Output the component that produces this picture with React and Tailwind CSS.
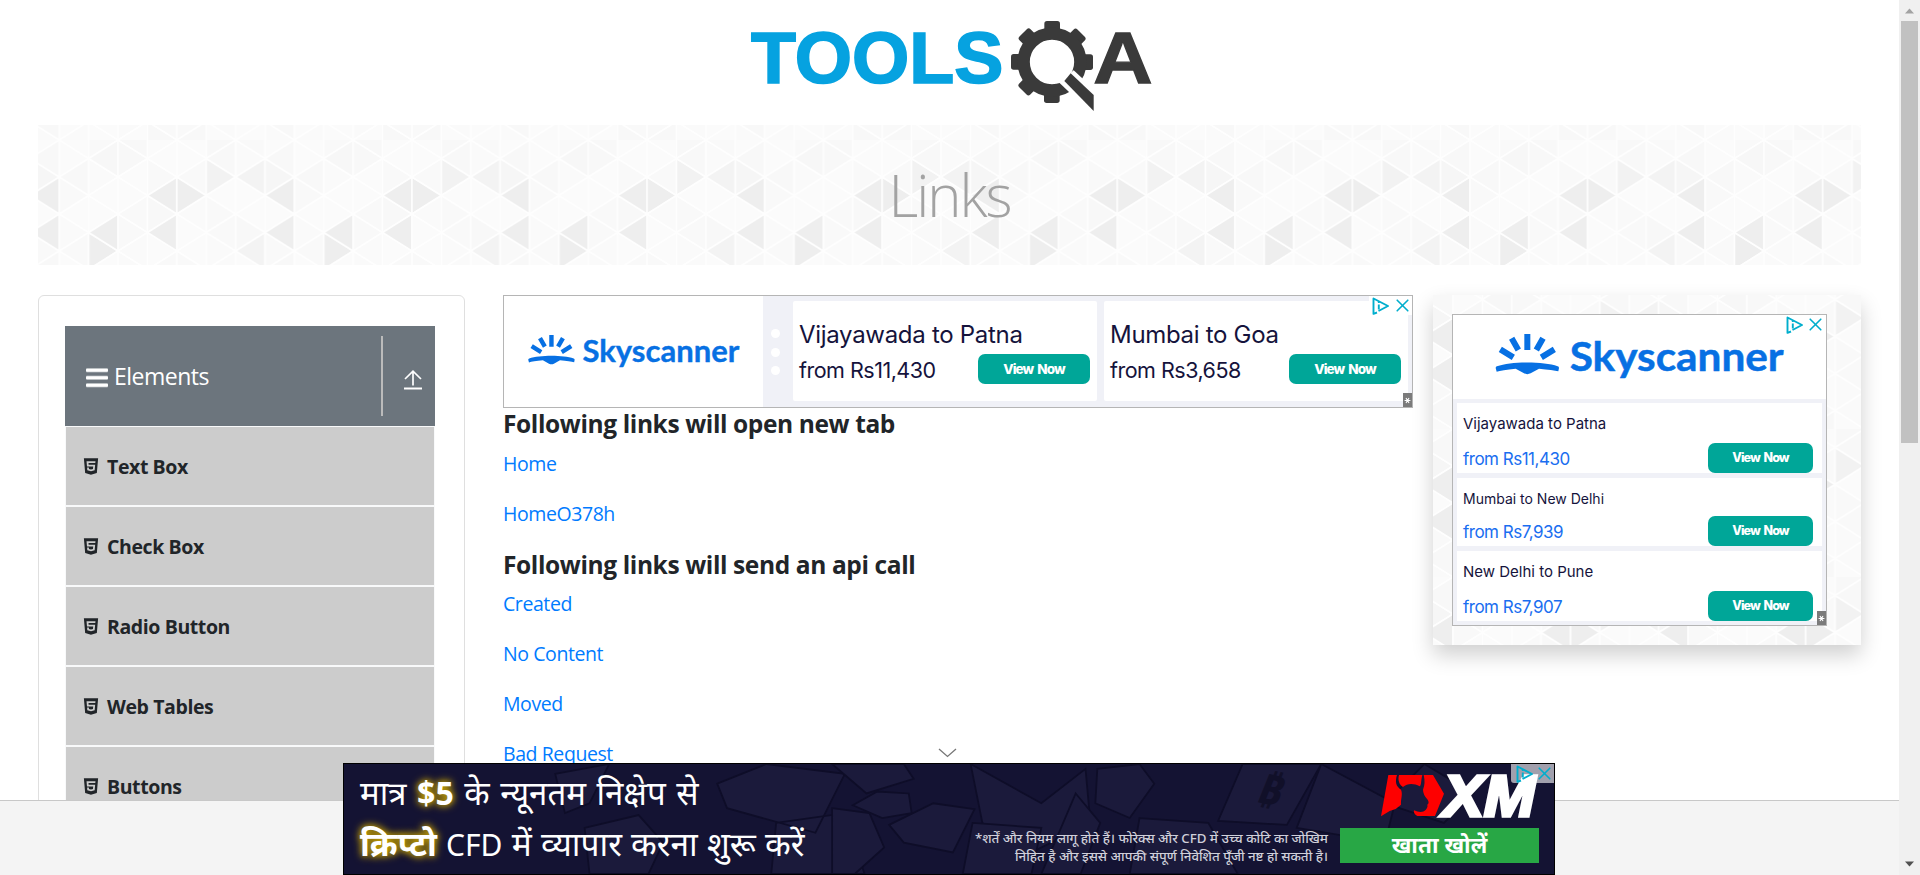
import React from "react";
import { FaHtml5 } from "react-icons/fa";

const COL = 29.39;
const ROW = 37;
const DARK = {
  "0L1": "#eeeeee", "0L2": "#eeeeee", "4L1": "#eeeeee", "4R1": "#eeeeee", "4L2": "#eeeeee",
  "2L2": "#eeeeee", "1R2": "#eeeeee", "2L-1": "#eeeeee", "5R0": "#f2f2f2", "7L0": "#f3f3f3",
  "7L2": "#f3f3f3", "7R0": "#f6f6f6", "6L-1": "#f4f4f4", "0L0": "#f8f8f8", "2L0": "#f7f7f7", "3R1": "#f8f8f8",
};
const SHADES = ["#fbfbfb", "#f9f9f9", "#fafafa", "#fbfbfb", "#f8f8f8"];

function Triangles({ id, dx, dy }) {
  const tris = [];
  for (let c = 0; c < 9; c++) {
    const odd = c % 2;
    for (let r = -1; r < 5; r++) {
      const x = c * COL;
      const y = r * ROW + (odd ? ROW / 2 : 0);
      const k = c % 8;
      tris.push({ key: `${c}L${r}`, pts: `${x},${y} ${x},${y + ROW} ${x - COL},${y + ROW / 2}`, fill: DARK[`${k}L${r}`] || SHADES[(k * 3 + r + 6) % 5] });
      tris.push({ key: `${c}R${r}`, pts: `${x},${y} ${x},${y + ROW} ${x + COL},${y + ROW / 2}`, fill: DARK[`${k}R${r}`] || SHADES[(k * 2 + r + 5) % 5] });
    }
  }
  return (
    <svg className="absolute inset-0 h-full w-full" aria-hidden="true">
      <defs>
        <pattern id={id} width={COL * 8} height={ROW * 4} patternUnits="userSpaceOnUse" patternTransform={`translate(${dx} ${dy})`}>
          {tris.map((t) => (
            <polygon key={t.key} points={t.pts} fill={t.fill} stroke="#fefefe" strokeWidth="1.6" strokeLinejoin="round" />
          ))}
        </pattern>
      </defs>
      <rect width="100%" height="100%" fill={`url(#${id})`} />
    </svg>
  );
}

function ToolsLogo() {
  return (
    <svg className="h-[125px] w-[440px]" viewBox="0 0 1320 375" role="img" aria-label="TOOLSQA">
      <text x="63" y="250" fontFamily="Liberation Sans, sans-serif" fontWeight="700" fontSize="216" fill="#06a2e0" stroke="#06a2e0" strokeWidth="5" textLength="757" lengthAdjust="spacingAndGlyphs">TOOLS</text>
      <g fill="#3a3a3a">
        {[0, 45, 90, 180, 225, 270, 315].map((a) => (
          <rect key={a} x="943" y="63" width="47" height="50" rx="8" transform={`rotate(${a} 966 186)`} />
        ))}
        <circle cx="966" cy="186" r="85" fill="none" stroke="#3a3a3a" strokeWidth="37" />
      </g>
      <polygon points="1031,211 1105,280 1105,360 988,248" fill="#fff" />
      <polygon points="1022,220 1091,285 1091,333 1003,243" fill="#3a3a3a" />
      <text x="1090" y="250" fontFamily="Liberation Sans, sans-serif" fontWeight="700" fontSize="216" fill="#3a3a3a" stroke="#3a3a3a" strokeWidth="4" textLength="178" lengthAdjust="spacingAndGlyphs">A</text>
    </svg>
  );
}

function SkyLogo({ className }) {
  return (
    <svg className={className} viewBox="0 0 868 150" role="img" aria-label="Skyscanner">
      <g transform="translate(-212 -141)" fill="#0770e3" stroke="none">
        <path stroke="#0770e3" strokeWidth="18" d="M308 144V192M261 157L281 192M355 157L335 192M227 190L266 214M389 190L350 214" />
        <path d="M213 246Q213 242 217 241C260 226 356 226 399 241Q403 242 403 246L401 256Q385 252 343 248L318 262Q308 267 298 262L273 248Q231 252 216 257Z" />
      </g>
      <text x="223" y="114" fontFamily="Lato, sans-serif" fontWeight="700" fontSize="122" fill="#0770e3" stroke="#0770e3" strokeWidth="1.5" textLength="642" lengthAdjust="spacingAndGlyphs">Skyscanner</text>
    </svg>
  );
}

function AdChoices({ className }) {
  return (
    <div className={className}>
      <svg width="18" height="18" viewBox="0 0 18 18" fill="none" stroke="#00aecd" strokeWidth="1.9" strokeLinejoin="round">
        <path d="M5 15.500L1.500 16.800V1.500L16 9L6.500 14" />
        <path d="M6.800 7.500V12.500M6.800 4.500V6" />
      </svg>
      <svg width="13" height="13" viewBox="0 0 13 13" stroke="#00aecd" strokeWidth="1.6" strokeLinecap="round">
        <path d="M1.200 1.200L11.800 11.800M11.800 1.200L1.200 11.800" />
      </svg>
    </div>
  );
}

function ViewNow({ className }) {
  return (
    <div className={`flex h-[30px] items-center justify-center rounded-[7px] bg-[#00a698] font-[Inter,sans-serif] font-extrabold text-white [word-spacing:2px] ${className}`}>
      View Now
    </div>
  );
}

function Badge({ className }) {
  return (
    <div className={`absolute flex h-[14px] w-[9px] items-center justify-center bg-[#7b7b7b] text-white ${className}`}>
      <svg width="7" height="7" viewBox="0 0 7 7" stroke="#fff" strokeWidth="1.1"><path d="M.6 3.500H6.400M2 1L5 6M5 1L2 6" /></svg>
    </div>
  );
}

function FlightWide({ route, price }) {
  return (
    <div className="flex h-[100px] w-[304px] flex-col rounded-[2px] bg-white pl-[6px] font-[Inter,sans-serif] text-[#15133c]">
      <div className="mt-[16px] h-[30px] text-[24px] leading-[35px] tracking-[-0.3px]">{route}</div>
      <div className="mt-[7px] flex h-[30px] justify-between pr-[7px]">
        <span className="text-[21.5px] leading-[33px] tracking-[-0.5px]">{price}</span>
        <ViewNow className="w-[112px] text-[13.500px] tracking-[-0.95px]" />
      </div>
    </div>
  );
}

function FlightRow({ route, price, className, title }) {
  return (
    <div className={`w-[365px] bg-white pr-[9px] pl-[6px] font-[Inter,sans-serif] ${className}`}>
      <div className={`leading-[41px] text-[#15133c] ${title}`}>{route}</div>
      <div className="flex h-[30px] justify-between">
        <span className="text-[17px] leading-[33px] tracking-[-0.5px] text-[#1a6ef0]">{price}</span>
        <ViewNow className="w-[105px] text-[12.500px] tracking-[-0.95px]" />
      </div>
    </div>
  );
}

const ITEMS = ["Text Box", "Check Box", "Radio Button", "Web Tables", "Buttons"];

function Sidebar() {
  return (
    <aside className="h-[600px] w-[427px] rounded-[6px] border border-[#dfdfdf] px-[26px] pt-[30px]">
      <div className="flex h-[100px] w-[370px] items-center bg-[#6c757d] pl-[21px] text-white">
        <svg width="22" height="20" viewBox="0 0 22 20" className="mt-[4px]">
          {[0, 7.5, 15].map((y) => (
            <g key={y} fill="#fff"><rect y={y} width="22" height="4.6" rx="1" opacity=".4" /><rect y={y + 0.8} width="22" height="3" rx="1" /></g>
          ))}
        </svg>
        <span className="ml-[6px] text-[23px] leading-[36px] tracking-[-0.5px]">Elements</span>
        <div className="ml-auto h-[80px] w-[2px] bg-[#bbbbbb]" />
        <svg width="18" height="20" viewBox="0 0 18 20" fill="none" stroke="#fff" className="mt-[7px] mr-[13px] ml-[21px]">
          <path d="M9 15.500V1.500M1 9L9 1.200L17 9" strokeWidth="1.700" />
          <path d="M0 18.500H18" strokeWidth="2" />
        </svg>
      </div>
      <ul className="w-[370px]">
        {ITEMS.map((t) => (
          <li key={t} className="flex h-[80px] items-center border border-[#f8f9fa] bg-[#cccccc] pl-[16px] text-[19.500px] font-bold tracking-[-0.4px] text-[#212529]">
            <FaHtml5 className="h-[19px] w-[18px]" />
            <span className="ml-[7px] pt-[2px]">{t}</span>
          </li>
        ))}
      </ul>
    </aside>
  );
}

function Heading({ children }) {
  return <h5 className="mb-[10px] pt-[1px] text-[24.500px] leading-[29px] font-bold tracking-[-0.38px]">{children}</h5>;
}

function Links({ items }) {
  return items.map((t) => (
    <p key={t} className="mb-[20px] text-[19.500px] leading-[30px] tracking-[-0.42px]"><a className="text-[#007bff]">{t}</a></p>
  ));
}

function XmBanner() {
  return (
    <div className="absolute top-[763px] left-[343px] flex h-[112px] w-[1212px] overflow-hidden border border-black bg-[#141333] font-['Noto_Sans','Noto_Sans_Devanagari',sans-serif] text-white">
      <svg className="absolute inset-0 h-full w-full" viewBox="0 0 1212 112" stroke="#0e0d28" strokeWidth="1.800" fill="#1b1a3b">
        <path d="M205 10L260 0L240 40L215 50ZM370 20L420 0L500 10L470 70L380 45ZM235 65L290 52L315 80L300 112H240ZM430 60L500 50L520 112H425Z" />
        <path d="M487 0L522 30L570 15L560 0ZM508 42L533 28L565 30L568 50L538 55ZM545 62L590 40L632 46L610 90L560 80ZM487 45L525 50L540 85L510 112H487ZM628 0L700 40L745 5L750 60L690 90L640 60Z" />
        <path d="M757 5L800 0L815 20L790 55L755 40ZM630 60L700 65L690 112H620ZM735 30L760 60L740 112H700ZM905 0H985L950 62L880 58ZM985 0L1060 40L1050 80L960 65ZM1090 0L1140 30L1110 60L1050 40ZM800 55L870 60L900 112H790Z" />
      </svg>
      <div className="absolute top-[4px] left-[916px] skew-x-[-10deg] rotate-12 text-[42px] leading-none font-bold text-[#111029]">₿</div>
      <div className="relative flex w-[620px] flex-col pl-[16px] leading-[51px] whitespace-nowrap">
        <div className="mt-[3px] h-[51px] text-[33px] [word-spacing:2px]">मात्र <b className="text-[32px] [text-shadow:0_0_6px_#c9a400,0_0_10px_#c9a400]">$5</b> के न्यूनतम निक्षेप से</div>
        <div className="h-[51px] text-[33.500px] [word-spacing:0.5px]"><b className="[text-shadow:0_0_6px_#c9a400,0_0_10px_#c9a400]">क्रिप्टो</b> <span className="text-[30px]">CFD</span> में व्यापार करना शुरू करें</div>
      </div>
      <div className="relative flex w-[364px] flex-col items-end pt-[65px] text-[13.300px] leading-[18px] font-medium whitespace-nowrap text-[#d0d0da]">
        <span>*शर्तें और नियम लागू होते हैं। फोरेक्स और CFD में उच्च कोटि का जोखिम</span>
        <span>निहित है और इससे आपकी संपूर्ण निवेशित पूँजी नष्ट हो सकती है।</span>
      </div>
      <div className="relative ml-[12px] flex flex-col">
        <svg className="mt-[10px] ml-[40px] h-[44px] w-[160px]" viewBox="243 103 480 132">
          <g fill="#fe0000">
            <path d="M268 106H294C288 125 290 140 306 150C312 165 305 175 306 195L290 208L272 214L246 230Z" />
            <path d="M300 106H370C365 125 368 135 362 140C345 130 325 130 312 142C300 135 296 120 300 106Z" />
            <path d="M374 106H402L435 162L408 229H355Q342 222 345 212Q362 220 375 215Q388 205 385 195Q392 190 386 180Q372 165 372 150Q380 130 374 106Z" />
          </g>
          <text x="432" y="229" fontFamily="Liberation Sans, sans-serif" fontWeight="700" fontStyle="italic" fontSize="172" fill="#fff" stroke="#fff" strokeWidth="10" textLength="276" lengthAdjust="spacingAndGlyphs">XM</text>
        </svg>
        <div className="mt-[10px] flex h-[35px] w-[199px] items-center justify-center bg-[#28a745] text-[22.500px] leading-none font-bold">खाता खोलें</div>
      </div>
      <AdChoices className="absolute top-0 right-0 flex h-[19px] w-[43px] items-center justify-between rounded-bl-[3px] bg-white/60 pr-[3px] pl-[5px]" />
    </div>
  );
}

export default function App() {
  return (
    <div className="relative flex h-[875px] w-[1920px] overflow-hidden bg-white font-['Open_Sans','Noto_Sans',sans-serif] text-[#212529]">
      <div className="relative flex h-[875px] w-[1899px] flex-col">
        <header className="flex h-[125px] pl-[730px]"><ToolsLogo /></header>
        <div className="relative ml-[38px] flex h-[140px] w-[1823px] items-center justify-center">
          <Triangles id="tri-top" dx={21.3} dy={15} />
          <h1 className="relative text-[58px] leading-[72px] font-light tracking-[-2px] text-[#a2a2a2]">Links</h1>
        </div>
        <div className="flex h-[535px] overflow-hidden pt-[30px] pl-[38px]">
          <Sidebar />
          <main className="ml-[38px] w-[910px]">
            <div className="relative flex h-[113px] border border-[#b5b5b5] bg-[#f0f1f7]">
              <div className="flex w-[259px] items-center bg-white pl-[24px]"><SkyLogo className="mt-[1px] h-[37px] w-[212px]" /></div>
              <div className="flex w-[30px] flex-col items-center gap-[9.500px] pt-[33px] pr-[6px]">
                {[0, 1, 2].map((i) => <i key={i} className="h-[9px] w-[9px] rounded-full bg-white" />)}
              </div>
              <div className="flex gap-[7px] pt-[5px]">
                <FlightWide route="Vijayawada to Patna" price="from Rs11,430" />
                <FlightWide route="Mumbai to Goa" price="from Rs3,658" />
              </div>
              <AdChoices className="absolute top-0 right-0 flex h-[19px] w-[43px] items-center justify-between bg-white pr-[3px] pl-[3px]" />
              <Badge className="right-0 bottom-0" />
            </div>
            <Heading>Following links will open new tab</Heading>
            <div className="pt-px"><Links items={["Home", "HomeO378h"]} /></div>
            <Heading>Following links will send an api call</Heading>
            <Links items={["Created", "No Content", "Moved", "Bad Request"]} />
          </main>
          <div className="relative ml-[20px] h-[350px] w-[428px] shadow-[0_10px_20px_rgba(0,0,0,0.19)]">
            <Triangles id="tri-side" dx={20} dy={-14} />
            <div className="relative mt-[19px] ml-[19px] flex h-[312px] w-[375px] flex-col border border-[#b5b5b5] bg-[#f0f1f7]">
              <div className="flex h-[84px] justify-center bg-white pt-[18px]"><SkyLogo className="h-[50px] w-[290px]" /></div>
              <div className="flex flex-col gap-[5px] pt-[4px] pl-[4px]">
                <FlightRow className="h-[70px]" title="h-[40px] text-[15px]" route="Vijayawada to Patna" price="from Rs11,430" />
                <FlightRow className="h-[68px]" title="h-[38px] text-[14px]" route="Mumbai to New Delhi" price="from Rs7,939" />
                <FlightRow className="h-[70px]" title="h-[40px] text-[15px]" route="New Delhi to Pune" price="from Rs7,907" />
              </div>
              <AdChoices className="absolute top-0 right-0 flex h-[19px] w-[43px] items-center justify-between bg-white pr-[4px] pl-[3px]" />
              <Badge className="right-0 bottom-0" />
            </div>
          </div>
        </div>
        <footer className="h-[75px] border-t border-[#c8c8c8] bg-[#f4f4f4]" />
      </div>
      <div className="flex w-[21px] flex-col items-center bg-[#f0f0f0]">
        <svg width="9" height="6" viewBox="0 0 9 6" className="mt-[8px]"><path d="M0 5.500L4.500 .5L9 5.500Z" fill="#a3a3a3" /></svg>
        <div className="mt-[7px] h-[422px] w-[17px] bg-[#c1c1c1]" />
        <svg width="9" height="6" viewBox="0 0 9 6" className="mt-auto mb-[8px]"><path d="M0 .5L4.500 5.500L9 .5Z" fill="#505050" /></svg>
      </div>
      <svg className="absolute top-[748px] left-[938px]" width="19" height="10" viewBox="0 0 19 10" fill="none" stroke="#777" strokeWidth="1.300"><path d="M1 1L9.500 8.500L18 1" /></svg>
      <XmBanner />
    </div>
  );
}
